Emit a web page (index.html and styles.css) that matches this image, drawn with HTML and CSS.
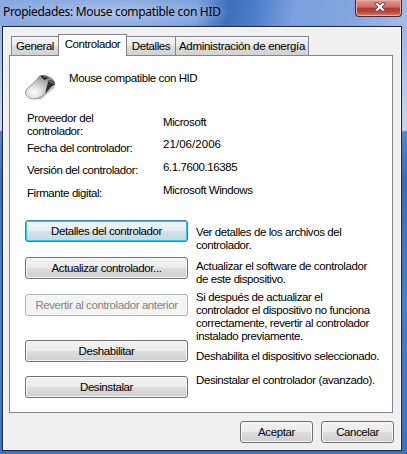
FILE: index.html
```html
<!DOCTYPE html>
<html lang="es">
<head>
<meta charset="utf-8">
<title>Propiedades: Mouse compatible con HID</title>
<link rel="stylesheet" href="styles.css">
</head>
<body>
<div class="window">
  <header class="titlebar">
    <h1 class="title">Propiedades: Mouse compatible con HID</h1>
    <button class="close" aria-label="Cerrar">
      <svg width="12" height="10" viewBox="0 0 12 10"><path d="M1 .8h3L6 3 8 .8h3v1.4L8 5l3 2.8v1.4H8L6 7 4 9.2H1V7.8L4 5 1 2.200Z" fill="#f4f1f4" stroke="#5b3946" stroke-width=".9"/></svg>
    </button>
  </header>
  <main class="client">
    <nav class="tabs">
      <button class="tab general">General</button>
      <button class="tab active">Controlador</button>
      <button class="tab detalles">Detalles</button>
      <button class="tab energia">Administración de energía</button>
    </nav>
    <section class="panel">
      <div class="device">
        <svg class="mouse" width="34" height="28" viewBox="0 0 34 28">
          <defs>
            <radialGradient id="shell" cx=".3" cy=".72" r=".75"><stop offset="0" stop-color="#fff"/><stop offset=".35" stop-color="#dedfdb"/><stop offset=".7" stop-color="#b3b4b4"/><stop offset="1" stop-color="#8b8c92"/></radialGradient>
          </defs>
          <path d="M9 26 17 26.500 30.500 15 31 10 24 13Z" fill="#c4c4c6"/>
          <path d="M15 3.500C17 2 26 3 29.500 7C31 9 30.500 11 28 12.500C23 15 22 23 13 25.500C7 27 1 24 1.500 19C2 15 10 11 15 3.500Z" fill="url(#shell)" stroke="#85868b" stroke-width=".8"/>
          <path d="M24.500 7.500C28 6.500 30.800 8.500 31 11.500C27 13 25 17 21.500 20.500C21.500 16 23.500 12 24.500 7.500Z" fill="#303138"/>
          <path d="M16 2.800C19 1.200 23 2 25.500 4.500L22 6.500C20 5 18 4 16 2.800Z" fill="#6c6e76"/>
          <path d="m17.500 3 3 3 2.500-1.500" stroke="#1d1e25" stroke-width="1.700" fill="none"/>
          <path d="M25 8.500c2 0 4 1 5 2.500" stroke="#8e9098" fill="none"/>
        </svg>
        <span class="device-name">Mouse compatible con HID</span>
      </div>
      <dl class="info">
        <div class="row r1"><dt>Proveedor del<br>controlador:</dt><dd>Microsoft</dd></div>
        <div class="row r2"><dt>Fecha del controlador:</dt><dd>21/06/2006</dd></div>
        <div class="row r3"><dt>Versión del controlador:</dt><dd>6.1.7600.16385</dd></div>
        <div class="row r4"><dt>Firmante digital:</dt><dd>Microsoft Windows</dd></div>
      </dl>
      <div class="actions">
        <div class="action a1"><button class="btn focused">Detalles del controlador</button><p>Ver detalles de los archivos del<br>controlador.</p></div>
        <div class="action a2"><button class="btn">Actualizar controlador...</button><p>Actualizar el software de controlador<br>de este dispositivo.</p></div>
        <div class="action a3"><button class="btn" disabled>Revertir al controlador anterior</button><p>Si después de actualizar el<br>controlador el dispositivo no funciona<br>correctamente, revertir al controlador<br>instalado previamente.</p></div>
        <div class="action a4"><button class="btn">Deshabilitar</button><p>Deshabilita el dispositivo seleccionado.</p></div>
        <div class="action a5"><button class="btn">Desinstalar</button><p>Desinstalar el controlador (avanzado).</p></div>
      </div>
    </section>
    <footer class="footer">
      <button class="btn">Aceptar</button>
      <button class="btn">Cancelar</button>
    </footer>
  </main>
</div>
</body>
</html>
```
FILE: styles.css
```css
* { box-sizing: border-box; margin: 0; padding: 0; }
body { width: 407px; height: 454px; overflow: hidden; font: 11.5px/13px "Liberation Sans", Arial, sans-serif; letter-spacing: -.41px; color: #000; }
button { font: inherit; letter-spacing: inherit; color: inherit; white-space: nowrap; }
.window {
  display: flex; flex-direction: column; width: 407px; height: 454px; padding: 0 5px 3px 2px;
  background: linear-gradient(#88a9df 0, #9db6e2 26px, #c9d5ed 130px, #5a82c7 132px, #3e6cb5 180px, #4d7dc6 300px, #3974bf 454px);
}
.titlebar {
  display: flex; justify-content: space-between; height: 26px; flex: none; margin: 0 -5px 0 -2px; padding: 0 5px 0 3px;
  background:
    radial-gradient(ellipse 125px 17px at 110px 13px, rgba(190,205,235,.8), rgba(170,192,232,.45) 60%, transparent),
    linear-gradient(100deg, #88a9e0 0, #7ba0dd 48%, #3d6fba 56%, #4b7cc8 62%, #7ba0dd 72%, #83a4df 85%, #a6bbe6);
}
.title { font: 12px/24px "Noto Sans", "Open Sans", sans-serif; letter-spacing: -.32px; white-space: nowrap; }
.close {
  display: flex; justify-content: center; align-items: center; width: 47px; height: 17px; padding: 0 0 2px 2px;
  border: 1px solid #46283b; border-top: 0; border-radius: 0 0 4px 4px;
  background: linear-gradient(#df9b91 0, #cb6e62 45%, #b5362c 50%, #b94739 75%, #d98373); box-shadow: inset 0 0 0 1px #e6aaa3;
}
.client { flex: 1; width: 400px; border: 1px solid #17254c; padding: 7px 8px 0 6px; background: #f0f0f0; box-shadow: inset 0 0 0 1px #fafafa; }
.tabs { display: flex; align-items: flex-end; height: 21px; padding-left: 2px; }
.tab { height: 19px; border: 1px solid #828290; border-bottom: 0; background: linear-gradient(#f3f3f3, #ebebeb 48%, #dcdcdc 52%, #d2d2d2); }
.tab + .tab { border-left: 0; }
.general { width: 48px; }
.tabs .active { width: 69px; height: 22px; margin-bottom: -1px; padding-bottom: 3px; border-left: 1px solid #828290; margin-left: -1px; background: #fff; z-index: 1; }
.detalles { width: 49px; }
.energia { width: 133px; letter-spacing: -.3px; }
.panel { height: 358px; width: 384px; border: 1px solid #828290; padding: 13px 0 0 15px; background: #fff; }
.device { display: flex; height: 43px; }
.mouse { margin: 4px 11px 0 -1px; }
.device-name { padding-top: 3px; }
.info { height: 108px; padding-left: 2px; }
.row { display: grid; grid-template-columns: 136px 1fr; white-space: nowrap; }
.r1 { height: 30px; }
.r1 dd { padding-top: 4px; }
.r2 { height: 22px; }
.r2 dd { margin-top: -4px; letter-spacing: .05px; }
.r3 { height: 23px; }
.r3 dd, .r4 dd { margin-top: -3px; }
.action { display: grid; grid-template-columns: 163px 1fr; column-gap: 8px; white-space: nowrap; }
.a1 { height: 37px; }
.a1 p { padding-top: 6px; }
.a2 { height: 37px; }
.a2 p { padding-top: 3px; }
.a3 { height: 46px; }
.a3 p { margin-top: -3px; }
.a4 { height: 36px; }
.a4 p { padding-top: 10px; }
.a5 p { margin-top: -2px; }
.btn { height: 22px; border: 1px solid #707070; border-radius: 3px; background: linear-gradient(#f2f2f2, #ebebeb 48%, #dddddd 52%, #cfcfcf); box-shadow: inset 0 0 0 1px #f8f8f8; }
.focused { border-color: #3c7fb1; box-shadow: inset 0 0 0 1px #35c5f4; background: linear-gradient(#eef5f7, #e5eef1 48%, #d4e1e6 52%, #c5d9e2); }
.btn:disabled { color: #838383; border-color: #adb2b5; background: #f4f4f4; }
.footer { display: flex; justify-content: flex-end; gap: 8px; padding-top: 8px; margin-right: -1px; }
.footer .btn { width: 73px; }
```
